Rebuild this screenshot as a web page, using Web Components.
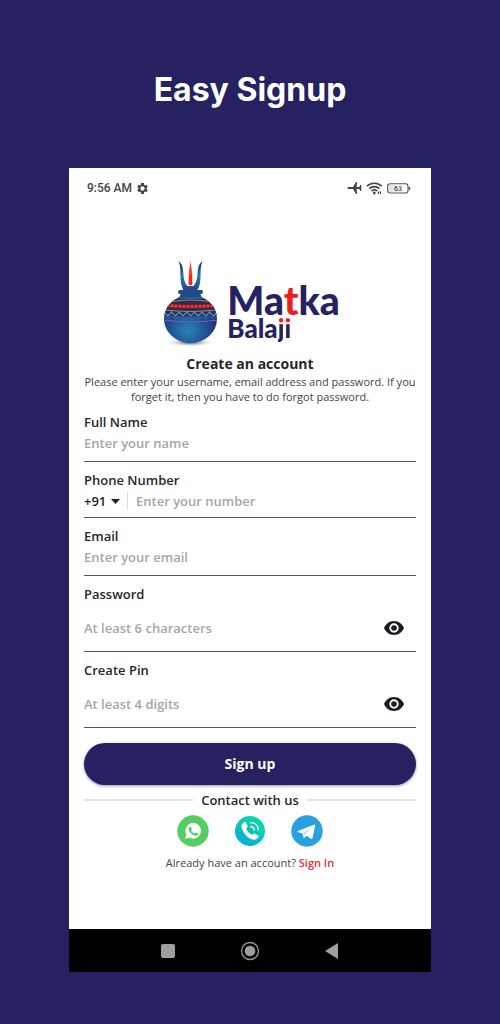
<!DOCTYPE html>
<html lang="en">
<head>
<meta charset="utf-8">
<meta name="viewport" content="width=device-width, initial-scale=1">
<title>Easy Signup</title>
<style>
  body { margin: 0; min-height: 100vh; background: #262262; font-family: "Open Sans", "Noto Sans", sans-serif; color: #262729; }
</style>
</head>
<body>
<signup-showcase></signup-showcase>

<script>
const define = (name, html, setup) => {
  const template = document.createElement('template');
  template.innerHTML = html;
  customElements.define(name, class extends HTMLElement {
    constructor() {
      super();
      this.attachShadow({ mode: 'open' }).append(template.content.cloneNode(true));
    }
    connectedCallback() { if (setup) setup(this, this.shadowRoot); }
  });
};

define('status-bar', `
<style>
  :host { display: flex; align-items: center; justify-content: space-between; height: 40px; padding: 0 20px 0 18px; font: 500 12px/16px Roboto, sans-serif; color: #444; }
  div { display: flex; align-items: center; gap: 4px; }
  svg { display: block; }
</style>
<div><span>9:56 AM</span>
  <svg width="13" height="13" viewBox="0 0 24 24" fill="#444"><path d="M19.4 13a7.500 7.500 0 0 0 0-2l2.200-1.700-2.200-4-2.700 1a7.500 7.500 0 0 0-1.700-1L14.500 2h-5L9 5.300a7.500 7.500 0 0 0-1.700 1l-2.700-1-2.200 4L4.600 11a7.500 7.500 0 0 0 0 2l-2.200 1.700 2.200 4 2.700-1a7.500 7.500 0 0 0 1.700 1l.5 3.300h5l.5-3.300a7.500 7.500 0 0 0 1.700-1l2.700 1 2.200-4zM12 16a4 4 0 1 1 0-8 4 4 0 0 1 0 8z"/></svg>
</div>
<div>
  <svg width="15" height="14" viewBox="0 0 15 14" fill="#444"><path d="M.5 7c0-.6.500-1 1.200-1H6l3-5h1.300L9.500 6h2.800l1-2h1v6h-1l-1-2H9.500l.8 5H9L6 8H1.700C1 8 .5 7.600.5 7z"/></svg>
  <svg width="17" height="14" viewBox="0 0 17 14" fill="none" stroke="#444" stroke-width="1.600"><path d="M1 5.200a10.500 10.500 0 0 1 14.600 0M3.200 7.700a7.400 7.400 0 0 1 10.200 0M5.400 10a4.300 4.300 0 0 1 5.800 0"/><circle cx="8.300" cy="12" r=".6"/><path d="M12.500 10.500v2.500M14.500 10.500v2.500" stroke-width="1.200"/></svg>
  <svg width="24" height="11" viewBox="0 0 24 11"><rect x=".7" y=".7" width="20.300" height="9.300" rx="2.500" fill="none" stroke="#555" stroke-width="1.100"/><rect x="2" y="2" width="8" height="6.800" fill="#e4e4e4"/><path d="M22.500 3.800v3.200" stroke="#555" stroke-width="1.500"/><text x="11" y="8" text-anchor="middle" font-size="7" fill="#444">63</text></svg>
</div>`);

define('brand-logo', `
<style>
  :host { display: flex; justify-content: center; gap: 8px; height: 92px; padding: 50px 0 4px 3px; color: #262262; font-family: Lato, sans-serif; font-weight: 900; }
  .words { padding-top: 27px; }
  .name { font-size: 39px; line-height: 30px; }
  .sub { font-size: 26px; line-height: 26px; }
  i { font-style: normal; color: #ee1c1c; }
  .sub i { color: transparent; background: linear-gradient(#ee1c1c 13px, #262262 13px); background-clip: text; -webkit-background-clip: text; }
</style>
<svg width="56" height="92" viewBox="0 0 56 92" aria-hidden="true">
  <defs>
    <radialGradient id="body" cx=".45" cy=".74" r=".65"><stop offset="0" stop-color="#2786ae"/><stop offset=".5" stop-color="#21539a"/><stop offset="1" stop-color="#23285f"/></radialGradient>
    <linearGradient id="horn" x1="0" x2="0" y1="0" y2="1"><stop offset="0" stop-color="#1f285f"/><stop offset=".5" stop-color="#257fa3"/><stop offset="1" stop-color="#223c80"/></linearGradient>
    <radialGradient id="shade"><stop offset="0" stop-color="#444"/><stop offset="1" stop-color="#fff" stop-opacity="0"/></radialGradient>
    <clipPath id="pot"><ellipse cx="27.500" cy="61" rx="26.500" ry="24"/></clipPath>
  </defs>
  <ellipse cx="27" cy="84.500" rx="26" ry="4.500" fill="url(#shade)"/>
  <path d="M15.500 3c8 6 2 17 9 25h6c7-8 1-19 9-25-3 6-1 18-3 24-1 4-3 6-4 7h-10c-2-1-3-3-4-7-2-6 0-18-3-24z" fill="url(#horn)"/>
  <path d="M27.500 2c1.200 7 2.200 14 2.200 23.500 0 2.800-4.400 2.800-4.400 0C25.300 16 26.300 9 27.500 2z" fill="#ee2a1e" stroke="#fff" stroke-width=".6"/>
  <ellipse cx="27.500" cy="61" rx="26.500" ry="24" fill="url(#body)"/>
  <g clip-path="url(#pot)">
    <path d="M0 43q28-4 56 0v14q-28 4-56 0z" fill="#2a2a5c"/>
    <path d="M6 44q22-4 44 0M1 52q26.500 3 53 0" fill="none" stroke="#b0864a" stroke-width="1.200"/>
    <path d="M4 47.500q23.500 2 47 0" fill="none" stroke="#7d2330" stroke-width="4"/>
    <path d="M5 47.500q23 2 46 0" fill="none" stroke="#ff3a1d" stroke-width="3" stroke-linecap="round" stroke-dasharray="0 4"/>
    <path d="M1 54l3.800 4 3.800-4 3.800 4 3.800-4 3.800 4 3.800-4 3.800 4 3.800-4 3.800 4 3.800-4 3.800 4 3.800-4 3.800 4 3.800-4" fill="none" stroke="#4f8fbd" stroke-width="1.300"/>
    <path d="M1 58l3.800 3 3.800-3 3.800 3 3.800-3 3.800 3 3.800-3 3.800 3 3.800-3 3.800 3 3.800-3 3.800 3 3.800-3 3.800 3 3.800-3" fill="none" stroke="#356ba6"/>
    <path d="M1 62q27 4 54 0" fill="none" stroke="#6c64b5"/>
  </g>
  <path d="M18 35h19l2 5H16z" fill="#1d4a80"/>
  <rect x="15" y="32" width="25" height="4" rx="2" fill="#224a88"/>
  <path d="M15 40h25" stroke="#2b6da4" stroke-width="1.500"/>
</svg>
<div class="words"><div class="name">Ma<i>t</i>ka</div><div class="sub">Bala<i>ji</i></div></div>`);

define('form-field', `
<style>
  :host { display: block; border-bottom: 1px solid #535088; padding-bottom: 7px; }
  :host([compact]) { padding-bottom: 5px; }
  :host([secret]) { padding-bottom: 0; }
  label { display: block; font-size: 13px; line-height: 20px; font-weight: 600; }
  .row { display: flex; align-items: center; height: 22px; }
  :host([secret]) .row { height: 47px; }
  input { flex: 1; min-width: 0; border: 0; outline: 0; padding: 0; background: none; color: inherit; font: 600 13px/20px "Open Sans", "Noto Sans", sans-serif; }
  input::placeholder { color: #a6a6a6; opacity: 1; }
  button { display: none; border: 0; padding: 0; margin-right: 12px; background: none; }
  :host([secret]) button { display: block; }
  svg { display: block; }
</style>
<label for="field"></label>
<div class="row"><slot name="prefix"></slot><input id="field">
  <button type="button" aria-label="Show"><svg width="20" height="14" viewBox="0 0 20 14"><path fill="#1b1a25" fill-rule="evenodd" d="M10 0c4.600 0 8.300 2.800 10 7-1.700 4.200-5.400 7-10 7S1.700 11.200 0 7c1.700-4.200 5.400-7 10-7zm0 2.300a4.700 4.700 0 1 0 0 9.400 4.700 4.700 0 0 0 0-9.400zm0 1.900a2.800 2.800 0 1 1 0 5.600 2.800 2.800 0 0 1 0-5.600z"/></svg></button>
</div>`, (host, root) => {
  root.querySelector('label').textContent = host.getAttribute('label');
  const input = root.querySelector('input');
  input.placeholder = host.getAttribute('placeholder');
  input.type = host.hasAttribute('secret') ? 'password' : host.getAttribute('type') || 'text';
  root.querySelector('button').onclick = () => { input.type = input.type === 'password' ? 'text' : 'password'; };
});

define('country-code', `
<style>
  :host { display: flex; align-items: center; border-right: 1px solid #ddd; height: 18px; margin-right: 8px; padding-right: 7px; }
  .box { display: flex; align-items: center; gap: 4px; }
  select { appearance: none; border: 0; outline: 0; padding: 0; margin: 0; background: none; color: inherit; font: 600 13px/18px "Open Sans", "Noto Sans", sans-serif; }
</style>
<div class="box"><select aria-label="Country code"><option>+91</option></select><svg width="9" height="5" viewBox="0 0 9 5"><path d="M0 0h9L4.500 5z" fill="#222"/></svg></div>`);

define('contact-links', `
<style>
  :host { display: block; }
  .title { display: flex; align-items: center; gap: 8px; font-size: 13px; line-height: 20px; font-weight: 600; margin-top: 5px; }
  .title::before, .title::after { content: ""; flex: 1; height: 2px; background: #e2e2e4; }
  nav { display: flex; justify-content: center; align-items: center; gap: 26px; margin-top: 5px; }
  a, svg { display: block; }
</style>
<div class="title">Contact with us</div>
<nav>
  <a href="#whatsapp" aria-label="WhatsApp"><svg width="32" height="32" viewBox="0 0 32 32"><circle cx="16" cy="16" r="15.700" fill="#55cd61"/><path d="M16.200 8a7.800 7.800 0 1 1-3.800 14.600L8 24l1.500-4.300A7.800 7.800 0 0 1 16.200 8z" fill="#fff"/><path d="M12.300 12.200c.7-.8 1.500-.7 1.800 0l.8 1.800c.2.500-.9 1.300-.7 1.700.6 1.200 1.700 2.100 3 2.700.5.200 1.100-1.100 1.700-.9l1.800.9c.6.300.3 1.300-.4 1.900-1.400 1.200-4.500-.1-6.200-1.800-1.900-1.700-3.300-4.700-1.800-6.300z" fill="#55cd61"/></svg></a>
  <a href="#call" aria-label="Call"><svg width="30" height="30" viewBox="0 0 30 30"><defs><linearGradient id="call" x1=".2" y1="1" x2=".8" y2="0"><stop offset="0" stop-color="#08a9dc"/><stop offset="1" stop-color="#0ddd9e"/></linearGradient></defs><circle cx="15" cy="15" r="15" fill="url(#call)"/><path d="M7 8.300l2-2c.6-.6 1.500-.4 1.900.3l1.700 3.100c.7 1.200-1.600 2.100-1.300 3.100.8 2.600 2.700 4.700 5.200 5.800 1 .4 2.300-1.500 3.400-.9l3 1.600c.8.400.9 1.300.3 1.900l-1.700 1.900c-1.500 1.600-6.400.2-10.400-3.700C7.200 15.500 5.500 9.900 7 8.300z" fill="#fff"/><path d="M15.500 10.500c2.300.2 3.500 1.600 3.700 3.600M15.500 6.500c4.700.2 7.700 3.300 7.900 7.700" fill="none" stroke="#fff" stroke-width="1.300" stroke-linecap="round"/></svg></a>
  <a href="#telegram" aria-label="Telegram"><svg width="32" height="32" viewBox="0 0 32 32"><circle cx="16" cy="16" r="15.700" fill="#29a0e0"/><path d="M6.400 16.300L23 9.700c.8-.3 1.400.2 1.200 1.100l-2.700 12.300c-.2.900-.9 1.200-1.700.6l-4.100-3-2.200 2.100c-.5.500-.9.300-1-.3l-1-4.100-4.800-1.300c-.7-.2-.8-.6-.3-.8z" fill="#fff"/><path d="M12 18l9-5.600-7.300 6.900-.6 2.700z" fill="#bcdff2"/></svg></a>
</nav>`);

define('system-nav', `
<style>
  :host { display: flex; justify-content: center; align-items: center; gap: 63px; height: 43px; background: #000; }
  button { border: 0; padding: 0; background: none; }
  svg { display: block; }
</style>
<button aria-label="Recent apps"><svg width="18" height="20" viewBox="0 0 18 20"><rect x="2" y="3" width="14" height="14" rx="2" fill="#9e9e9e"/></svg></button>
<button aria-label="Home"><svg width="20" height="20" viewBox="0 0 20 20"><circle cx="10" cy="10" r="8.500" fill="none" stroke="#999" stroke-width="1.300"/><circle cx="10" cy="10" r="5.300" fill="#9e9e9e"/></svg></button>
<button aria-label="Back"><svg width="18" height="20" viewBox="0 0 18 20"><path d="M15 2v16L2 10z" fill="#9e9e9e"/></svg></button>`);

define('signup-form', `
<style>
  :host { display: block; padding: 0 15px 59px; }
  h2 { margin: 0; font-size: 14px; line-height: 20px; font-weight: 700; text-align: center; }
  p { margin: 0; font-size: 11px; line-height: 15px; text-align: center; color: #444; }
  form { display: flex; flex-direction: column; gap: 8px; margin-top: 8px; }
  .submit { margin-top: 7px; height: 42px; border: 0; border-radius: 21px; background: #262262; color: #fff; box-shadow: 0 1px 3px #26226280; font: 700 14px/20px "Open Sans", "Noto Sans", sans-serif; }
  .signin { margin-top: 8px; }
  a { color: #e02f35; font-weight: 600; text-decoration: none; }
</style>
<h2>Create an account</h2>
<p>Please enter your username, email address and password. If you forget it, then you have to do forgot password.</p>
<form onsubmit="return false">
  <form-field label="Full Name" placeholder="Enter your name"></form-field>
  <form-field label="Phone Number" placeholder="Enter your number" type="tel" compact><country-code slot="prefix"></country-code></form-field>
  <form-field label="Email" placeholder="Enter your email" type="email"></form-field>
  <form-field label="Password" placeholder="At least 6 characters" secret></form-field>
  <form-field label="Create Pin" placeholder="At least 4 digits" secret></form-field>
  <button class="submit">Sign up</button>
</form>
<contact-links></contact-links>
<p class="signin">Already have an account? <a href="#signin">Sign In</a></p>`);

define('signup-showcase', `
<style>
  :host { display: block; padding: 68px 69px 52px; }
  h1 { margin: 0 0 56px; font: 700 32px/44px Inter, sans-serif; color: #fff; text-align: center; }
  main { background: #fff; }
</style>
<h1>Easy Signup</h1>
<main><status-bar></status-bar><brand-logo></brand-logo><signup-form></signup-form><system-nav></system-nav></main>`);
</script>
</body>
</html>
